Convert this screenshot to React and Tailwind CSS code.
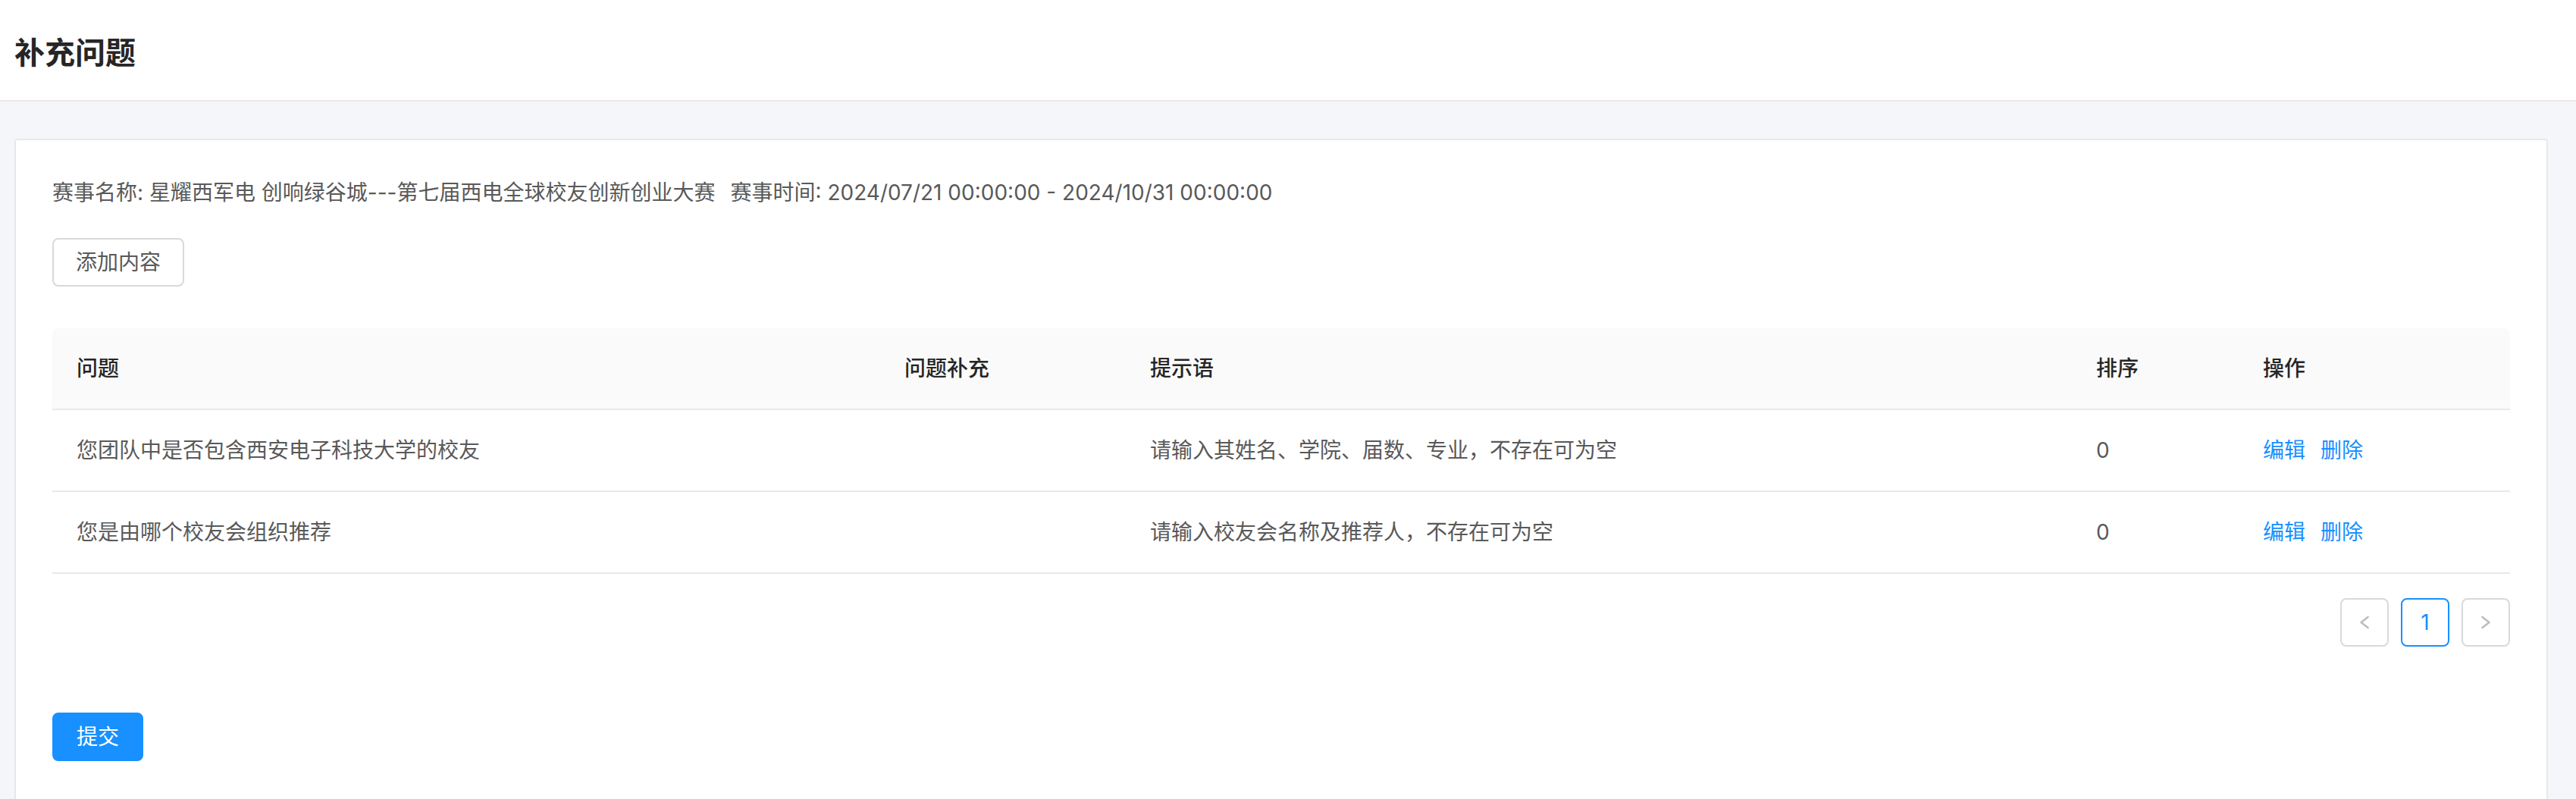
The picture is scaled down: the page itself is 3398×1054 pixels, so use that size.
import React from "react";

const rows = [
  {
    q: "您团队中是否包含西安电子科技大学的校友",
    extra: "",
    tip: "请输入其姓名、学院、届数、专业，不存在可为空",
    sort: 0,
  },
  {
    q: "您是由哪个校友会组织推荐",
    extra: "",
    tip: "请输入校友会名称及推荐人，不存在可为空",
    sort: 0,
  },
];

function Chevron({ dir }) {
  return (
    <svg width="20" height="24" viewBox="0 0 20 24" fill="none">
      <path
        d={dir === "left" ? "M14.5 5 L5.5 12 L14.5 19" : "M5.5 5 L14.5 12 L5.5 19"}
        stroke="#bdbdbd"
        strokeWidth="2.6"
        strokeLinecap="round"
        strokeLinejoin="round"
      />
    </svg>
  );
}

export default function App() {
  return (
    <div className="min-h-screen bg-[#f5f6fa] font-['Inter','Noto_Sans_CJK_SC',sans-serif]">
      {/* header */}
      <div className="h-[134px] bg-white border-b-2 border-[#f0e6ea] flex items-center pl-[19px] pt-[8px]">
        <h1 className="text-[40px] font-semibold text-[#262626] leading-none">补充问题</h1>
      </div>

      <div className="pl-[19px] pr-[37px] pt-[49px]">
        <div className="bg-white border-2 border-[#e8e8e8] rounded-[4px] px-[48px] pt-[48px] pb-[60px]">
          <div className="text-[28px] leading-[42px] text-[#595959] mb-[39px]">
            <span className="mr-[20px]">赛事名称: 星耀西军电 创响绿谷城---第七届西电全球校友创新创业大赛</span>
            <span>赛事时间: 2024/07/21 00:00:00 - 2024/10/31 00:00:00</span>
          </div>

          <button className="h-[64px] px-[29px] border-2 border-[#d9d9d9] rounded-[8px] text-[28px] text-[#595959] bg-white">
            添加内容
          </button>

          <table className="mt-[55px] w-full table-fixed border-separate border-spacing-0 text-[28px] leading-[42px]">
            <colgroup>
              <col className="w-[1092px]" />
              <col className="w-[324px]" />
              <col className="w-[1248px]" />
              <col className="w-[220px]" />
              <col className="w-[358px]" />
            </colgroup>
            <thead>
              <tr className="bg-[#fafafa] text-[#262626] text-left">
                <th className="font-medium px-[32px] py-[32px] border-b-2 border-[#e8e8e8] rounded-tl-[8px]">问题</th>
                <th className="font-medium px-[32px] py-[32px] border-b-2 border-[#e8e8e8]">问题补充</th>
                <th className="font-medium px-[32px] py-[32px] border-b-2 border-[#e8e8e8]">提示语</th>
                <th className="font-medium px-[32px] py-[32px] border-b-2 border-[#e8e8e8]">排序</th>
                <th className="font-medium px-[32px] py-[32px] border-b-2 border-[#e8e8e8] rounded-tr-[8px]">操作</th>
              </tr>
            </thead>
            <tbody className="text-[#595959]">
              {rows.map((r, i) => (
                <tr key={i}>
                  <td className="px-[32px] py-[32px] border-b-2 border-[#e8e8e8]">{r.q}</td>
                  <td className="px-[32px] py-[32px] border-b-2 border-[#e8e8e8]">{r.extra}</td>
                  <td className="px-[32px] py-[32px] border-b-2 border-[#e8e8e8]">{r.tip}</td>
                  <td className="px-[32px] py-[32px] border-b-2 border-[#e8e8e8]">{r.sort}</td>
                  <td className="px-[32px] py-[32px] border-b-2 border-[#e8e8e8]">
                    <div className="flex gap-[20px] text-[#1890ff]">
                      <a>编辑</a>
                      <a>删除</a>
                    </div>
                  </td>
                </tr>
              ))}
            </tbody>
          </table>

          <div className="flex justify-end gap-[16px] mt-[32px]">
            <div className="w-[64px] h-[64px] border-2 border-[#d9d9d9] rounded-[8px] flex items-center justify-center">
              <Chevron dir="left" />
            </div>
            <div className="w-[64px] h-[64px] border-2 border-[#1890ff] rounded-[8px] flex items-center justify-center text-[28px] text-[#1890ff]">
              1
            </div>
            <div className="w-[64px] h-[64px] border-2 border-[#d9d9d9] rounded-[8px] flex items-center justify-center">
              <Chevron dir="right" />
            </div>
          </div>

          <button className="mt-[87px] h-[64px] px-[30px] border-2 border-[#1890ff] rounded-[8px] bg-[#1890ff] text-white text-[28px]">
            提交
          </button>
        </div>
      </div>
    </div>
  );
}
